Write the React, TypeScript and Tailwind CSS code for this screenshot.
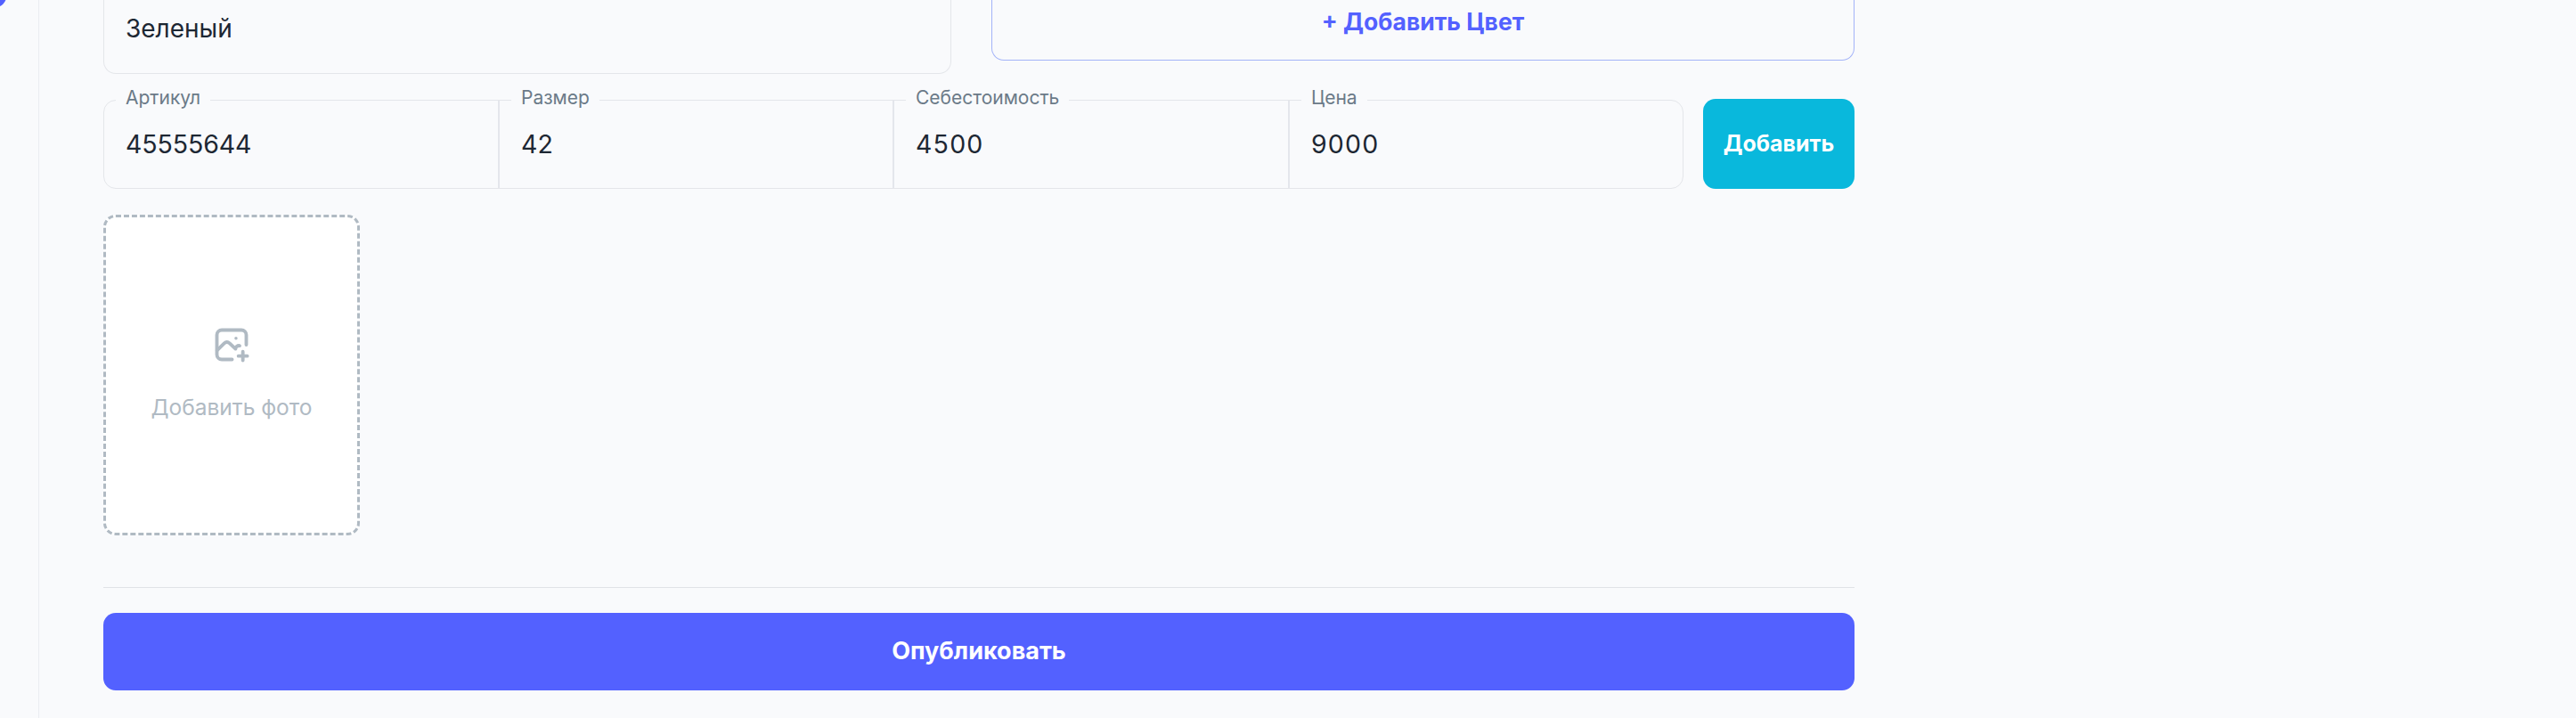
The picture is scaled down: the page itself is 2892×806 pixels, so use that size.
const fields = [
    { label: "Артикул", value: "45555644" },
    { label: "Размер", value: "42" },
    { label: "Себестоимость", value: "4500" },
    { label: "Цена", value: "9000" },
];

function ImageAddIcon() {
    return (
        <svg
            className="h-[44px] w-[44px]"
            viewBox="0 0 24 24"
            fill="none"
            stroke="currentColor"
            strokeWidth="2.1"
            strokeLinecap="round"
            strokeLinejoin="round"
        >
            <path d="M21 12V6a3 3 0 0 0-3-3H6a3 3 0 0 0-3 3v12a3 3 0 0 0 3 3h6.3" />
            <path d="M3.2 15.4l4.3-4.3c.98-.92 2.3-.92 3.3 0l3.6 3.4" />
            <path d="M14.5 13.6l.6-.5c.55-.45 1.15-.6 1.8-.5" />
            <path d="M14.7 8.1h.01" strokeWidth="1.9" />
            <path d="M16.2 18.9h5.4M18.9 16.2v5.4" />
        </svg>
    );
}

function Field({ label, value }: { label: string; value: string }) {
    return (
        <div className="group relative border-l-2 border-[#e4e6ec] pt-[31px] pl-[24px] first:border-l-0 first:pl-[25px]">
            <span className="absolute -top-[17px] left-[13px] bg-[#f9fafc] px-[11px] text-[21px] leading-[28px] text-[#6b7a88]">
                {label}
            </span>
            <div className="text-[28.5px] leading-[36px] text-[#1d2733] group-first:-ml-px group-first:tracking-[-0.1px] group-nth-[n+3]:tracking-[1.2px]">
                {value}
            </div>
        </div>
    );
}

export default function App() {
    return (
        <div className="flex h-[806px] w-full overflow-hidden bg-[#f9fafc] font-['Inter',sans-serif]">
            <aside className="relative w-[44px] shrink-0 border-r border-[#ebedf2]">
                <div className="absolute -top-[16px] -left-[17px] h-[24px] w-[24px] rounded-full bg-[#5361ff]" />
            </aside>

            <main className="ml-[72px] w-[1966px]">
                {/* Color row */}
                <div className="flex items-start gap-[45px]">
                    <div className="h-[83px] w-[952px] rounded-b-[14px] border border-t-0 border-[#e4e6ea] pt-[14px] pl-[24px] text-[28px] leading-[36px] text-[#1d2733]">
                        Зеленый
                    </div>
                    <button className="flex h-[68px] w-[969px] justify-center rounded-b-[14px] border border-t-0 border-[#a3b3f8] pt-[7px] text-[26.5px] leading-[34px] font-bold text-[#5361ff]">
                        + Добавить Цвет
                    </button>
                </div>

                {/* Variant row */}
                <div className="mt-[28px] flex items-end gap-[22px]">
                    <div className="grid h-[100px] w-[1774px] grid-cols-[442px_443px_444px_443px] rounded-[14px] border border-[#e4e6ea]">
                        {fields.map((field) => (
                            <Field key={field.label} {...field} />
                        ))}
                    </div>
                    <button className="h-[101px] w-[170px] rounded-[14px] bg-[#09b8dc] text-[25px] font-bold text-white">
                        Добавить
                    </button>
                </div>

                {/* Photo upload */}
                <div className="mt-[29px] flex h-[360px] w-[288px] flex-col items-center rounded-[14px] border-3 border-dashed border-[#b0bac3] bg-white pt-[121px] text-[#b0bac3]">
                    <ImageAddIcon />
                    <span className="mt-[30px] text-[24.5px] leading-[36px]">Добавить фото</span>
                </div>

                <hr className="mt-[58px] border-[#e1e3e7]" />
                <button className="mt-[28px] h-[87px] w-full rounded-[14px] bg-[#5361ff] text-[27px] font-bold text-white">
                    Опубликовать
                </button>
            </main>
        </div>
    );
}
